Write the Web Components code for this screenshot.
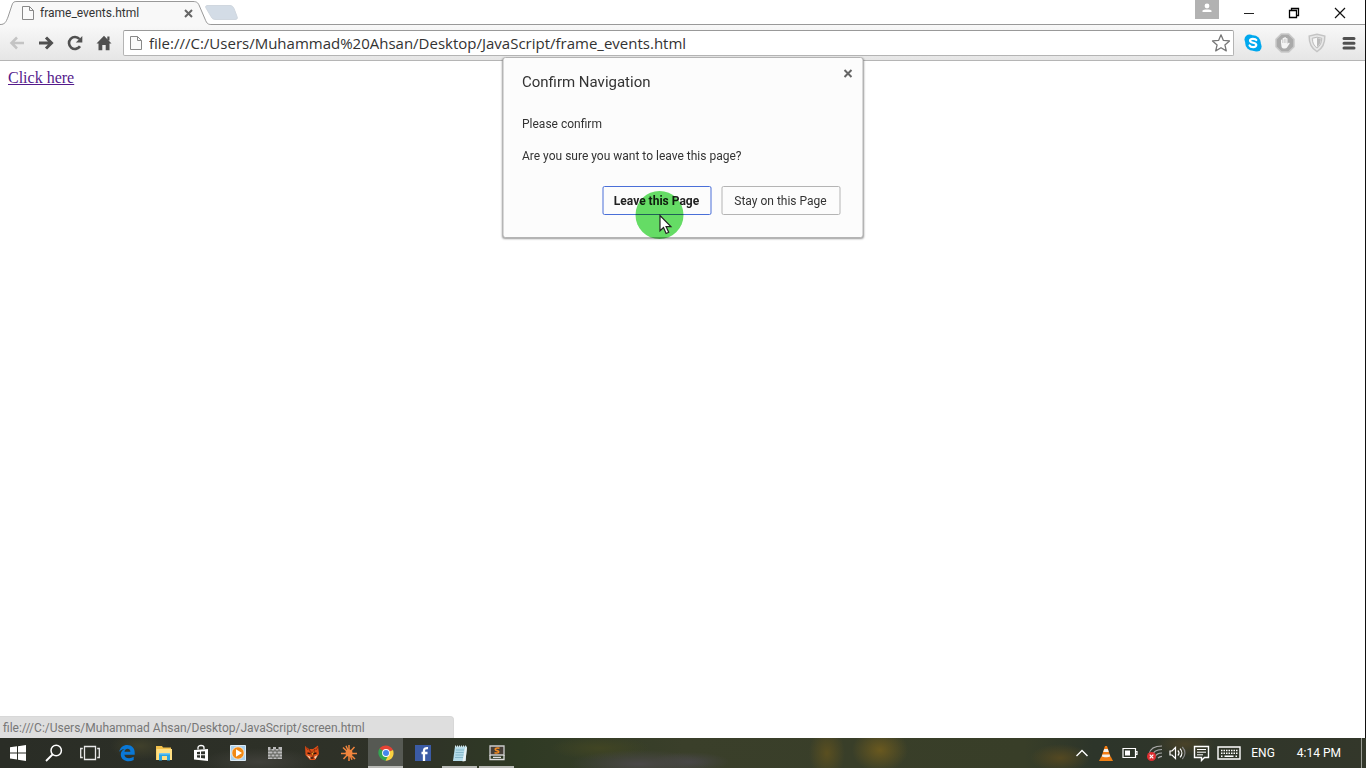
<!DOCTYPE html>
<html lang="en">
<head>
<meta charset="utf-8">
<title>frame_events.html</title>
<style>
body { margin: 0; font-family: Roboto, "Open Sans", sans-serif; color: #333; background: #fff; }
</style>
</head>
<body>
<desktop-screen></desktop-screen>
<script>
const define = (name, html, setup) => {
  const template = document.createElement("template");
  template.innerHTML = html;
  customElements.define(name, class extends HTMLElement {
    connectedCallback() {
      if (this.shadowRoot) return;
      this.attachShadow({ mode: "open" }).append(template.content.cloneNode(true));
      if (setup) setup(this, this.shadowRoot);
    }
  });
};

/* Each icon: [width, height, markup] */
const ICONS = {
  page: [12, 14, `<path d="M1 .5h6.500l4 4v9H.5V.5z" fill="#fafafa" stroke="#888"/><path d="M7.500.5v4h4" fill="none" stroke="#888"/>`],
  close: [9, 9, `<path d="M1 1l7 7M8 1L1 8" stroke="#666" stroke-width="2"/>`],
  back: [16, 14, `<path d="M15 7H2.500M8 1.500L2.500 7 8 12.500" fill="none" stroke="#c4c4c4" stroke-width="2.500"/>`],
  forward: [16, 14, `<path d="M1 7h12M8 1.500L13.500 7 8 12.500" fill="none" stroke="#505050" stroke-width="3"/>`],
  reload: [16, 16, `<path d="M13 11.300A6 6 0 1 1 12.500 4" fill="none" stroke="#505050" stroke-width="2.600"/><path d="M15.300 1v6.500H8.800z" fill="#505050"/>`],
  home: [16, 16, `<path d="M8 .8L15.500 8.500H13.500V15.300H9.700V10H6.300v5.300H2.500V8.500H.5z" fill="#505050"/><path d="M11.300 1.500h2.200v4h-2.200z" fill="#505050"/>`],
  star: [20, 20, `<path d="M10 1.800l2.400 5.600 6.100.5-4.600 4 1.400 6-5.300-3.200-5.300 3.200 1.400-6-4.600-4 6.100-.5z" fill="#fff" stroke="#777" stroke-width="1.300" stroke-linejoin="round"/>`],
  skype: [18, 18, `<circle cx="9" cy="9" r="7.800" fill="#00a8ee"/><circle cx="5.500" cy="5.500" r="5" fill="#00a8ee"/><circle cx="12.600" cy="12.600" r="5" fill="#00a8ee"/><path d="M12.300 6.100C11.500 4.500 6.200 4 6 6.600c-.1 2.800 6.300 1.600 6.300 4.400-.2 2.900-5.700 2.500-6.700.5" fill="none" stroke="#fff" stroke-width="2.200" stroke-linecap="round"/>`],
  block: [20, 20, `<path d="M6.300 1h7.400L19 6.300v7.400L13.700 19H6.300L1 13.700V6.300z" fill="#aaa" stroke="#c9c9c9" stroke-width="1.500"/><path d="M6 10V7.200a.8.8 0 0 1 1.600 0V5.500a.8.8 0 0 1 1.600 0V4.800a.8.8 0 0 1 1.700 0v.9a.8.8 0 0 1 1.600 0v5l1-.9c.8-.4 1.500.3 1 1L12 14.500c-1 1.500-4.500 1.600-5.400-.4z" fill="#f4f4f4"/><path d="M7.700 7v3M9.300 6v4M10.900 6v4" stroke="#aaa" stroke-width=".5"/>`],
  shield: [18, 20, `<path d="M9 1.300l7.800 1.800C17 10 14.500 15.500 9 18.600 3.500 15.500 1 10 1.200 3.100z" fill="#e9e9e9" stroke="#c4c4c4" stroke-width="1.500"/><path d="M9 5v9C6.500 12.200 5.300 9.500 5.300 6z" fill="#f8f8f8"/><path d="M9 5l3.700 1C12.700 9.500 11.500 12.200 9 14z" fill="#bbb"/><path d="M9 4.200l4.800 1c0 4.600-1.800 7.800-4.800 9.900-3-2.100-4.800-5.300-4.800-9.900z" fill="none" stroke="#bdbdbd"/>`],
  menu: [14, 14, `<path d="M2 2.500h10M2 7.200h10M2 12h10" stroke="#505050" stroke-width="3" stroke-linecap="round"/>`],
  user: [24, 19, `<path d="M0 0h24v19H0z" fill="#b2b2b2"/><circle cx="12" cy="6" r="2.400" fill="#fff"/><path d="M7.500 12V10.500C8 9 16 9 16.500 10.500V12z" fill="#fff"/>`],
  minimize: [12, 12, `<path d="M1 6.500h10" stroke="#222"/>`],
  restore: [12, 12, `<path d="M3.500 3V1.500h7v7H9M1.500 3.500h7v7h-7z" fill="none" stroke="#000" stroke-width="1.300"/>`],
  exit: [12, 12, `<path d="M1 1l10 10M11 1L1 11" stroke="#111" stroke-width="1.200"/>`],
  windows: [18, 18, `<path d="M1 3.300L8 2.300V8.400H1zM9 2.200L17 1v7.400H9zM1 9.500h7v6.100l-7-1zM9 9.500h8V17l-8-1.200z" fill="#fff"/>`],
  search: [18, 18, `<circle cx="11.200" cy="6.500" r="5.200" fill="none" stroke="#fff" stroke-width="1.500"/><path d="M7.500 10.500L1 17" stroke="#fff" stroke-width="1.800"/>`],
  tasks: [20, 16, `<path d="M4.500 1.500h11v13h-11zM2.800 3.500H.7v9h2.100M17.200 3.500h2.100v9h-2.100" fill="none" stroke="#e8e8e8" stroke-width="1.300"/>`],
  edge: [18, 18, `<path d="M1.200 8C2 3.500 5.300 1 9.200 1c4.600 0 7.500 3.200 7.500 7.700v2H6.400c.3 4 5.900 4.300 9.300 2.100v3.300C10.500 18.700 3 17 2.800 10.800 2.800 8 4.200 6 6.400 5 4.100 5.300 2.300 6.300 1.200 8zm5.300-.3h5.900c0-4-5.500-4-5.900 0z" fill="#0a78d7"/>`],
  folder: [18, 18, `<path d="M1 2h6l1 1.500h8V16H1z" fill="#f3c14b"/><path d="M1.500 5H17v11H1.500z" fill="#ffdf83"/><path d="M4 9h11v7.500h-3V12H7v4.500H4z" fill="#2ba5e4"/><path d="M4 9h11v1.500H4z" fill="#75c6ef"/>`],
  store: [16, 18, `<path d="M1 6l14-1v12L1 15.500z" fill="#fff"/><path d="M5 5.500V3.500C5 .8 11 .8 11 3.500V5" fill="none" stroke="#fff" stroke-width="1.300"/><path d="M4 8l3-.3v2.500H4zM8 7.600l4-.4v3H8zM4 11.200h3v2.600L4 13.500zM8 11.200h4v3.200L8 14z" fill="#30332d"/>`],
  player: [16, 16, `<path d="M.5.5h15v15H.5z" fill="#a9d1ee" stroke="#dbeaf5"/><circle cx="8" cy="8" r="6.200" fill="#f18a16" stroke="#fff" stroke-width=".7"/><path d="M6 4.300L12 8l-6 3.700z" fill="#fff"/>`],
  wall: [16, 14, `<path d="M1 1h2.500v2H6V1h3v2h2.500V1H15v12H1z" fill="#bbb"/><path d="M1 5h14M1 8h14M1 11h14M4 3v2M8 3v2M12 3v2M6 5v3M10 5v3M4 8v3M8 8v3M12 8v3M6 11v2M10 11v2" stroke="#4c4e46" stroke-width=".8"/>`],
  fox: [16, 16, `<path d="M1 1l4 3h4l5-3.500L15 9l-4 6H6L1.500 10z" fill="#db4f17"/><path d="M5 4l3 4 3-4-2 8zM2 2l2 3M14 2l-2 3" fill="#f7a028" stroke="#7b210c" stroke-width=".7"/><path d="M2.500 10l4 2v2.500zM10 12l3.500-2-2 4z" fill="#f5d5b6"/><path d="M3.500 8l3 .8M9.500 8.800l3-.8M6.500 13h3" stroke="#32130c" stroke-width="1.400"/>`],
  burst: [16, 16, `<path d="M8 0v16M0 8.500h16M2 2.500l12 11.500M13.500 2L2.500 14M5 .8l6 14" stroke="#f0853d" stroke-width="1.500"/><circle cx="8" cy="8" r="3.500" fill="#f0853d"/>`],
  chrome: [16, 16, `<path d="M8 8L1.500 3.500C5-1 12.500-.5 15 5z" fill="#e64335"/><path d="M8 8l7-3c2 5-1.500 11-7.500 10.700z" fill="#fbd140"/><path d="M8 8L1.500 3.500C-1.500 8.300 1.500 15 7.500 15.700L11 9z" fill="#35a552"/><circle cx="8" cy="8" r="3.900" fill="#fff"/><circle cx="8" cy="8" r="3" fill="#4587ee"/>`],
  facebook: [16, 16, `<path d="M0 0h16v16H0z" fill="#3b5ba5"/><path d="M9 16V5.500C9 3.500 10.500 3 13 3.200M6.500 8h6" fill="none" stroke="#fff" stroke-width="2.300"/>`],
  notes: [16, 17, `<path d="M3 1.500h12l-1.500 14.500H1z" fill="#b4dcea"/><path d="M13 3l2-1-1.500 14-3 .5z" fill="#e9f3f5"/><path d="M4 5h8M3.600 7.500h8M3.400 10h8M3 12.500h8" stroke="#7aafc2" stroke-width=".8"/><path d="M3 1.500h12" stroke="#d3e7ee" stroke-width="2" stroke-dasharray="1 1"/>`],
  sublime: [16, 16, `<path d="M1 1h14v9H1z" fill="#453e37" stroke="#ccc" stroke-width="1.300"/><path d="M1 10v4.500h14V10M4 12.300h8" fill="none" stroke="#ddd" stroke-width="1.300"/><path d="M10.500 3.300C7 2.300 5 4 7 5.300l2 .7c2 1.200 0 2.500-3.500 1.700" fill="none" stroke="#f28b20" stroke-width="1.500"/>`],
  chevron: [14, 10, `<path d="M1.500 8L7 2.500 12.500 8" fill="none" stroke="#fff" stroke-width="1.400"/>`],
  cone: [16, 17, `<path d="M3 12h10l2 4H1z" fill="#ef8015"/><path d="M7 1h2l4 12c-2 1.500-8 1.500-10 0z" fill="#f47c12"/><path d="M6.200 4h3.600l1 3H5.200zM4.400 9.500h7.200l.6 2c-2 1-6.400 1-8.400 0z" fill="#f3f1ec"/>`],
  battery: [16, 12, `<path d="M1 1.500h12.500v9H1zM13.500 4.500H15v3h-1.500" fill="none" stroke="#fff" stroke-width="1.200"/><path d="M3 3.500h5v5H3z" fill="#fff"/>`],
  wifi: [17, 18, `<path d="M3 10C4 5 9 2 16 2M6 12c1-4 5-6.500 10-6.500M9 13c1-2.500 3.500-4 7-4M12 14c1-1 2-1.700 4-1.700" fill="none" stroke="#aaa" stroke-width="1.200"/><circle cx="5.500" cy="12.500" r="4.500" fill="#df2e31"/><path d="M3.700 10.700l3.600 3.600M7.300 10.700l-3.600 3.600" stroke="#fff" stroke-width="1.200"/>`],
  volume: [18, 14, `<path d="M1 5h2l3.500-3.500v11L3 9H1z" fill="none" stroke="#fff" stroke-width="1.200"/><path d="M8.800 4.500c1.500 1.500 1.500 3.500 0 5M11 2.700c2.500 2.500 2.500 6 0 8.600" fill="none" stroke="#fff" stroke-width="1.200"/><path d="M13.300 1c3.500 3.500 3.500 8.500 0 12" fill="none" stroke="#888" stroke-width="1.200"/>`],
  message: [18, 17, `<path d="M1.500 1.500h14v11h-4l-3 3v-3h-7z" fill="none" stroke="#fff" stroke-width="1.400"/><path d="M4 4.500h9M4 7.200h9M4 9.800h6" stroke="#fff"/>`],
  keyboard: [24, 14, `<path d="M1 1h22v12H1z" fill="none" stroke="#fff" stroke-width="1.400"/><path d="M4 4.500h17M4 7.200h17" stroke="#fff" stroke-width="1.500" stroke-dasharray="1.500 1"/><path d="M4 10.200h1.500M7.500 10.200h9M18.500 10.200H20" stroke="#fff" stroke-width="1.400"/>`],
  pointer: [14, 21, `<path d="M1.500 1.500v15.300l3.500-3.300 2.600 6 2.600-1.200-2.600-5.600h4.800z" fill="#fff" stroke="#222" stroke-width="1.200"/>`]
};

define("ui-icon", `<style>
:host { display: inline-flex; flex: none; }
svg { display: block; }
</style>`, (host, root) => {
  const [w, h, body] = ICONS[host.getAttribute("name")];
  root.innerHTML += `<svg width="${w}" height="${h}" viewBox="0 0 ${w} ${h}" aria-hidden="true">${body}</svg>`;
});

define("icon-button", `<style>
:host { display: flex; flex: none; width: var(--w, 24px); }
button { flex: 1; display: flex; align-items: center; justify-content: center; padding: 0; border: 0; background: none; }
</style><button type="button"><slot></slot></button>`, (host, root) => {
  root.querySelector("button").setAttribute("aria-label", host.getAttribute("label"));
});

define("browser-tab", `<style>
:host { display: flex; position: relative; width: 212px; height: 25px; }
.shape { position: absolute; inset: 0; }
.row { position: relative; flex: 1; display: flex; align-items: center; gap: 6px; padding: 1px 14px 0 22px; }
.title { flex: 1; font-size: 12px; line-height: 16px; color: #333; }
</style>
<svg class="shape" width="212" height="25" aria-hidden="true"><path d="M0 24.500C5 24.500 6 22 8 17L12 5C13 2 14 1.500 17 1.500H193C197 1.500 198 3 199 5L205 19C207 24 208 24.500 212 24.500V25H0z" fill="#f8f8f8"/><path d="M0 24.500C5 24.500 6 22 8 17L12 5C13 2 14 1.500 17 1.500H193C197 1.500 198 3 199 5L205 19C207 24 208 24.500 212 24.500" fill="none" stroke="#999"/></svg>
<div class="row"><ui-icon name="page"></ui-icon><span class="title"><slot></slot></span><icon-button label="Close tab" style="--w:20px"><ui-icon name="close"></ui-icon></icon-button></div>`);

define("tab-strip", `<style>
:host { display: flex; height: 25px; background: linear-gradient(#999, #999) 0 100% / 100% 1px no-repeat #fff; }
.new { align-self: flex-start; margin: 4px 0 0 -7px; padding: 0; border: 0; background: none; position: relative; height: 17px; }
.new svg { display: block; }
.window { display: flex; margin-left: auto; align-items: flex-start; }
.window ui-icon[name="user"] { margin-right: 6px; }
icon-button { height: 26px; }
</style>
<browser-tab>frame_events.html</browser-tab>
<button class="new" type="button" aria-label="New tab"><svg width="34" height="17"><path d="M3 1.500h22c2 0 3 1 4 3l3 8c1 2 0 3-2 3H11c-3 0-4-1-5-3L1 4C0 2 1 1.500 3 1.500z" fill="#d3dce6" stroke="#d0d7df"/></svg></button>
<div class="window"><ui-icon name="user"></ui-icon>
<icon-button label="Minimize" style="--w:48px"><ui-icon name="minimize"></ui-icon></icon-button>
<icon-button label="Restore" style="--w:42px"><ui-icon name="restore"></ui-icon></icon-button>
<icon-button label="Close" style="--w:50px"><ui-icon name="exit"></ui-icon></icon-button></div>`);

define("address-bar", `<style>
:host { display: flex; align-items: center; height: 24px; border: 1px solid #b4b4b4; border-top-color: #999; border-radius: 2px; background: #fff; padding-left: 6px; }
input { flex: 1; min-width: 0; margin: 0 0 0 7px; padding: 0; border: 0; outline: 0; background: none; font: 15px/22px "Open Sans", "Noto Sans", sans-serif; color: #333; }
</style><ui-icon name="page"></ui-icon><input type="text" aria-label="Address" value="file:///C:/Users/Muhammad%20Ahsan/Desktop/JavaScript/frame_events.html"><icon-button label="Bookmark"><ui-icon name="star"></ui-icon></icon-button>`);

define("browser-toolbar", `<style>
:host { display: flex; align-items: center; height: 35px; padding: 0 0 0 2px; background: linear-gradient(#f8f8f8, #e6e6e6); border-bottom: 1px solid #b5b5b5; }
address-bar { flex: 1; margin: 0 3px 0 5px; }
</style>
<icon-button label="Back" style="--w:29px"><ui-icon name="back"></ui-icon></icon-button>
<icon-button label="Forward" style="--w:29px"><ui-icon name="forward"></ui-icon></icon-button>
<icon-button label="Reload" style="--w:29px"><ui-icon name="reload"></ui-icon></icon-button>
<icon-button label="Home" style="--w:29px"><ui-icon name="home"></ui-icon></icon-button>
<address-bar></address-bar>
<icon-button label="Skype" style="--w:32px"><ui-icon name="skype"></ui-icon></icon-button>
<icon-button label="Ad blocker" style="--w:32px"><ui-icon name="block"></ui-icon></icon-button>
<icon-button label="Shield" style="--w:32px"><ui-icon name="shield"></ui-icon></icon-button>
<icon-button label="Menu" style="--w:32px"><ui-icon name="menu"></ui-icon></icon-button>`);

define("confirm-dialog", `<style>
:host { display: block; box-sizing: border-box; width: 361px; padding: 14px 22px 22px 19px; border: 1px solid #b4b4b4; border-radius: 3px; background: #fcfcfc; box-shadow: 0 1px 2px #0006; color: #333; }
h1 { margin: 0 0 22px; font-size: 15px; line-height: 20px; font-weight: 400; }
p { margin: 0 0 12px; font-size: 12px; line-height: 20px; }
.actions { display: flex; justify-content: flex-end; gap: 10px; padding-top: 8px; }
.actions button { box-sizing: border-box; height: 29px; padding: 0; border: 1px solid #b4b4b4; border-radius: 2px; background: #fcfcfc; font: 12px/16px Roboto, "Open Sans", sans-serif; color: #333; width: 119px; white-space: nowrap; }
.actions .primary { width: 109px; border-color: #4a6fd8; font-weight: 700; color: #222; }
.close { position: absolute; top: 5px; right: 2px; height: 20px; }
.glow { position: absolute; left: 132px; top: 133px; width: 48px; height: 48px; border-radius: 50%; background: #66df66; mix-blend-mode: multiply; pointer-events: none; }
.cursor { position: absolute; left: 155px; top: 156px; pointer-events: none; }
</style>
<h1>Confirm Navigation</h1><p>Please confirm</p><p>Are you sure you want to leave this page?</p>
<div class="actions"><button type="button" class="primary">Leave this Page</button><button type="button">Stay on this Page</button></div>
<icon-button class="close" label="Close dialog"><ui-icon name="close"></ui-icon></icon-button>
<span class="glow"></span><ui-icon class="cursor" name="pointer"></ui-icon>`, (host) => {
  host.setAttribute("role", "dialog");
  host.setAttribute("aria-label", "Confirm Navigation");
});

define("status-bubble", `<style>
:host { display: block; box-sizing: border-box; width: 454px; height: 22px; padding: 2px 3px; border: 1px solid #d8d8d8; border-width: 1px 1px 0 0; border-radius: 0 4px 0 0; background: #dedede; font-size: 12px; line-height: 18px; color: #777; }
</style><slot></slot>`);

define("web-page", `<style>
:host { display: flex; flex-direction: column; justify-content: space-between; align-items: flex-start; }
main { padding: 8px; font: 16px/18px "Liberation Serif", serif; }
a { color: #551a8b; }
</style><main><a href="screen.html">Click here</a></main><status-bubble>file:///C:/Users/Muhammad Ahsan/Desktop/JavaScript/screen.html</status-bubble>`);

define("browser-window", `<style>
:host { display: flex; flex-direction: column; position: relative; border-right: 1px solid #111; }
web-page { flex: 1; }
confirm-dialog { position: absolute; top: 57px; left: 50%; transform: translateX(-50%); }
</style><tab-strip></tab-strip><browser-toolbar></browser-toolbar><web-page></web-page><confirm-dialog></confirm-dialog>`);

define("task-item", `<style>
:host { display: flex; width: 37px; box-sizing: border-box; padding: 0 1px; }
button { flex: 1; display: flex; align-items: center; justify-content: center; padding: 0; border: 0; background: none; }
:host([running]) button { box-shadow: inset 0 -2px #b9bab6; }
:host([active]) button { background: #565953; }
:host([narrow]) { width: 36px; }
</style><button type="button"><slot></slot></button>`, (host, root) => {
  root.querySelector("button").setAttribute("aria-label", host.getAttribute("label"));
});

define("task-bar", `<style>
:host { display: flex; justify-content: space-between; height: 30px; color: #fff;
  background: radial-gradient(ellipse 28px 22px at 880px 12px, #6a591f, #6a591f00), radial-gradient(ellipse 18px 26px at 827px 15px, #5a4f20, #5a4f2000), radial-gradient(ellipse 70px 14px at 640px 26px, #4a4848, #4a484800), radial-gradient(ellipse 40px 10px at 690px 24px, #474646, #47464600), radial-gradient(ellipse 50px 12px at 600px 10px, #414523, #41452300), radial-gradient(ellipse 60px 14px at 260px 24px, #40403a, #40403a00), radial-gradient(ellipse 30px 14px at 140px 8px, #40402b, #40402b00), radial-gradient(ellipse 30px 14px at 1060px 20px, #544821, #54482100), radial-gradient(ellipse 30px 12px at 1185px 6px, #4a4228, #4a422800), linear-gradient(90deg, #2a2d26, #2f3228 30%, #2f3a24 38%, #3a3f2a 50%, #383e28 75%, #2d352a 80%, #33372a); }
.apps { display: flex; }
.tray { display: flex; align-items: center; }
.tray icon-button { height: 30px; }
.label { font-size: 12px; line-height: 16px; white-space: nowrap; }
.lang { margin: 0 22px 0 7px; }
.desktop { align-self: stretch; margin-left: 20px; border-left: 1px solid #999b94; width: 4px; }
</style><div class="apps"></div><div class="tray"></div>`, (host, root) => {
  const apps = [["windows", "Start"], ["search", "Search"], ["tasks", "Task view"], ["edge", "Edge"], ["folder", "File Explorer"], ["store", "Store"], ["player", "Media Player"], ["wall", "Firewall"], ["fox", "Fox"], ["burst", "Burst"], ["chrome", "Chrome", "running active"], ["facebook", "Facebook"], ["notes", "Notepad", "running"], ["sublime", "Sublime Text", "running"]];
  root.querySelector(".apps").innerHTML = apps.map(([icon, label, state = ""], i) => `<task-item label="${label}" ${state} ${i < 3 ? "narrow" : ""}><ui-icon name="${icon}"></ui-icon></task-item>`).join("");
  const tray = [["chevron", "Show hidden icons"], ["cone", "VLC"], ["battery", "Battery"], ["wifi", "Network"], ["volume", "Volume"], ["message", "Notifications"]];
  root.querySelector(".tray").innerHTML = tray.map(([icon, label]) => `<icon-button label="${label}"><ui-icon name="${icon}"></ui-icon></icon-button>`).join("") + `<icon-button label="Keyboard" style="--w:30px"><ui-icon name="keyboard"></ui-icon></icon-button><span class="label lang">ENG</span><span class="label">4:14 PM</span><span class="desktop"></span>`;
});

define("desktop-screen", `<style>
:host { display: flex; flex-direction: column; min-height: 100vh; }
browser-window { flex: 1; }
</style><browser-window></browser-window><task-bar></task-bar>`);
</script>
</body>
</html>
